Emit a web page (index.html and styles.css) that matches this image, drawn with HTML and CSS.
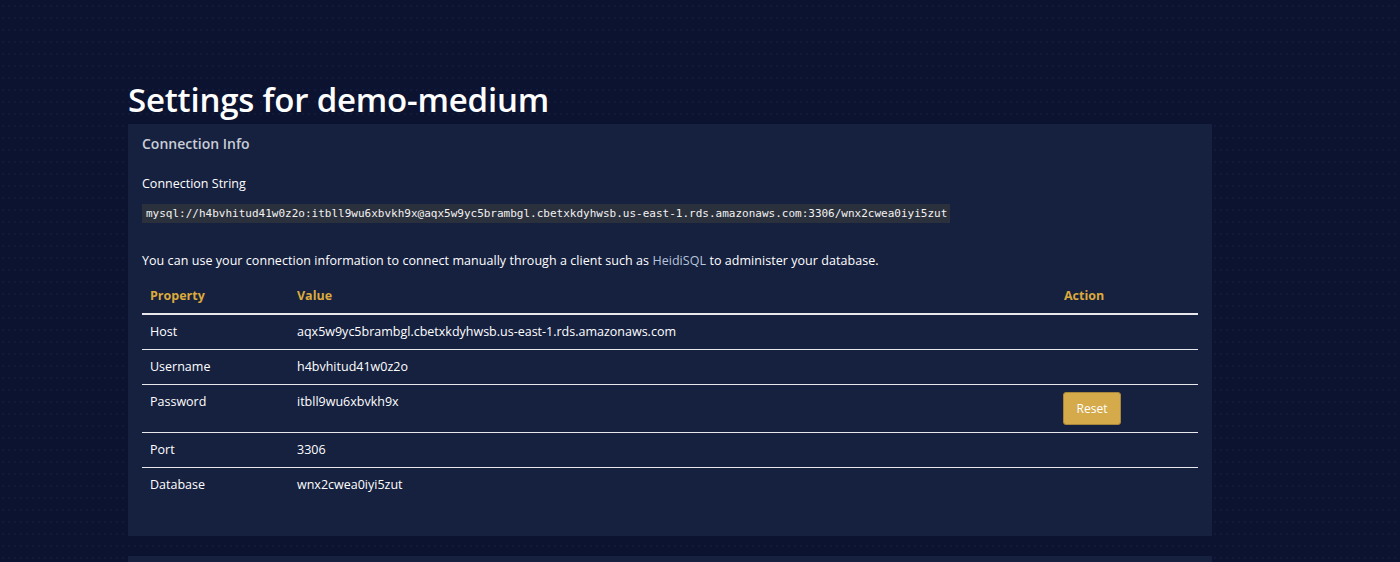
FILE: index.html
```html
<!DOCTYPE html>
<html lang="en">
<head>
<meta charset="utf-8">
<title>Settings for demo-medium</title>
<link rel="stylesheet" href="styles.css">
</head>
<body>
<main class="page">
  <h1 class="title">Settings for demo-medium</h1>
  <section class="card">
    <h2 class="card-title">Connection Info</h2>
    <div class="field-label">Connection String</div>
    <code class="conn">mysql://h4bvhitud41w0z2o:itbll9wu6xbvkh9x@aqx5w9yc5brambgl.cbetxkdyhwsb.us-east-1.rds.amazonaws.com:3306/wnx2cwea0iyi5zut</code>
    <p class="note">You can use your connection information to connect manually through a client such as <a class="link" href="#">HeidiSQL</a> to administer your database.</p>
    <table class="props">
      <thead>
        <tr><th class="c-prop">Property</th><th class="c-val">Value</th><th class="c-act">Action</th></tr>
      </thead>
      <tbody>
        <tr><td>Host</td><td>aqx5w9yc5brambgl.cbetxkdyhwsb.us-east-1.rds.amazonaws.com</td><td></td></tr>
        <tr><td>Username</td><td>h4bvhitud41w0z2o</td><td></td></tr>
        <tr><td>Password</td><td>itbll9wu6xbvkh9x</td><td class="act"><button class="btn">Reset</button></td></tr>
        <tr><td>Port</td><td>3306</td><td></td></tr>
        <tr><td>Database</td><td>wnx2cwea0iyi5zut</td><td></td></tr>
      </tbody>
    </table>
  </section>
  <section class="card card-next"></section>
</main>
</body>
</html>
```

FILE: styles.css
```css
html, body {
  margin: 0;
  padding: 0;
}
body {
  background-color: #0b1330;
  background-image: radial-gradient(circle, rgba(60, 80, 130, 0.18) 0.6px, transparent 0.9px);
  background-size: 6px 12px;
  color: #ffffff;
  font-family: "Open Sans", "Noto Sans", sans-serif;
  height: 562px;
  overflow: hidden;
}
.page {
  width: 1084px;
  margin: 0 0 0 128px;
  padding-top: 76px;
}
.title {
  margin: 0;
  font-size: 33px;
  font-weight: 600;
  line-height: 48px;
  letter-spacing: -0.2px;
  color: #ffffff;
}
.card {
  background: #16213f;
  padding: 10px 14px 34px 14px;
}
.card-title {
  margin: 0;
  font-size: 14px;
  font-weight: 600;
  color: #c9cdd6;
  line-height: 20px;
}
.field-label {
  margin-top: 21px;
  font-size: 12.5px;
  line-height: 18px;
}
.conn {
  display: inline-block;
  margin-top: 11px;
  background: #2b303d;
  color: #f2f2f2;
  font-family: "DejaVu Sans Mono", "Liberation Mono", monospace;
  font-size: 11px;
  line-height: 19px;
  padding: 0 3px 0 4px;
}
.note {
  margin: 29px 0 0 0;
  font-size: 12.5px;
  line-height: 18px;
  letter-spacing: 0.05px;
}
.link {
  color: #b8c4dc;
  text-decoration: none;
}
.props {
  width: 100%;
  border-collapse: collapse;
  margin-top: 9px;
  font-size: 12.5px;
}
.props th {
  text-align: left;
  color: #dcaa3c;
  font-weight: 700;
  padding: 8px;
  line-height: 18px;
  border-bottom: 2px solid #e8e8ec;
}
.c-prop { width: 131px; }
.c-act { width: 126px; }
.props td {
  vertical-align: top;
  padding: 8px;
  line-height: 18px;
  border-top: 1px solid #e8e8ec;
}
.props tbody tr:first-child td {
  border-top: none;
}
.props td.act {
  padding: 7px 8px 7px 7px;
}
.btn {
  background: #d4aa4b;
  color: #ffffff;
  border: 1px solid #a8873a;
  border-radius: 3px;
  font-family: "Open Sans", "Noto Sans", sans-serif;
  font-size: 12px;
  width: 58px;
  height: 33px;
  padding: 0;
  cursor: pointer;
}
.card-next {
  margin-top: 20px;
  height: 40px;
  padding: 0;
}
```
